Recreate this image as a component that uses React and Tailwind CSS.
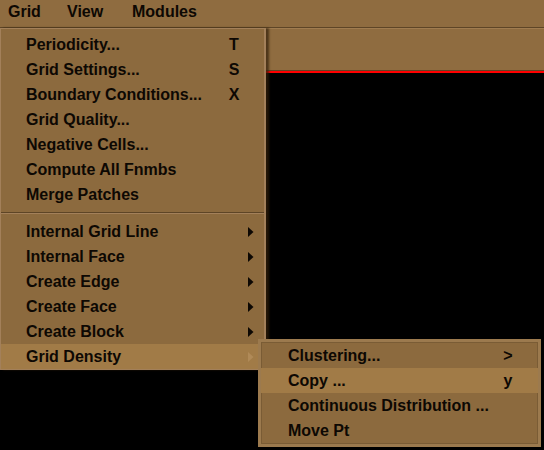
const font = { fontFamily: '"Liberation Sans", Arial, sans-serif' };

const mainItems = [
  { label: 'Periodicity...', key: 'T' },
  { label: 'Grid Settings...', key: 'S' },
  { label: 'Boundary Conditions...', key: 'X' },
  { label: 'Grid Quality...' },
  { label: 'Negative Cells...' },
  { label: 'Compute All Fnmbs' },
  { label: 'Merge Patches' },
];

const subItems = [
  { label: 'Internal Grid Line' },
  { label: 'Internal Face' },
  { label: 'Create Edge' },
  { label: 'Create Face' },
  { label: 'Create Block' },
];

const density = [
  { label: 'Clustering...', key: '>' },
  { label: 'Copy ...', key: 'y', active: true },
  { label: 'Continuous Distribution ...' },
  { label: 'Move Pt' },
];

function Arrow({ light }) {
  return (
    <svg width="6" height="10" viewBox="0 0 6 10" className="shrink-0">
      <path d="M0 0L5.5 5L0 10Z" fill={light ? '#b08a58' : '#0d0803'} />
    </svg>
  );
}

function Row({ label, shortcut, arrow, active }) {
  return (
    <div className={`flex h-[25px] items-center pl-[25px] ${active ? 'bg-[#a17b47]' : ''}`}>
      <span className="flex-1">{label}</span>
      {shortcut && <span className="mr-[22px] w-[16px] text-center">{shortcut}</span>}
      {arrow && <span className="mr-[10px] flex"><Arrow light={active} /></span>}
    </div>
  );
}

export default function App() {
  return (
    <div className="relative h-[450px] w-[544px] overflow-hidden bg-black text-[16px] font-bold text-[#0d0803]" style={font}>
      <div className="flex h-[28px] items-center border-b border-[#5e4526] bg-[#8f6c40] pl-[8px] pb-[3px]">
        <span className="w-[59px]">Grid</span>
        <span className="w-[65px]">View</span>
        <span>Modules</span>
      </div>
      <div className="h-[45px] border-t border-[#a07c50] border-b-[2px] border-b-[#ff0000] bg-[#8f6c40] shadow-[inset_0_-1px_0_#5e4526]" />

      <div className="absolute left-0 top-[28px] w-[266px] border border-[#a3805a] border-r-[2px] bg-[#8c6a3e] pt-[3px] shadow-[3px_0_2px_rgba(50,32,10,0.7)]">
        {mainItems.map((it) => (
          <Row key={it.label} label={it.label} shortcut={it.key} />
        ))}
        <div className="flex h-[12px] items-center">
          <div className="h-[2px] w-full border-t border-[#5e4526] border-b border-b-[#a3805a]" />
        </div>
        {subItems.map((it) => (
          <Row key={it.label} label={it.label} arrow />
        ))}
        <Row label="Grid Density" arrow active />
      </div>

      <div className="absolute left-[258px] top-[339px] w-[283px] border-[3px] border-[#9c7a4e] bg-[#8c6a3e] py-px shadow-[inset_0_0_0_1px_#7a5c35]">
        {density.map((it) => (
          <div key={it.label} className={`flex h-[25px] items-center pl-[27px] ${it.active ? 'bg-[#a17b47]' : ''}`}>
            <span className="flex-1">{it.label}</span>
            {it.key && <span className="mr-[24px] w-[12px] text-center">{it.key}</span>}
          </div>
        ))}
      </div>
    </div>
  );
}
